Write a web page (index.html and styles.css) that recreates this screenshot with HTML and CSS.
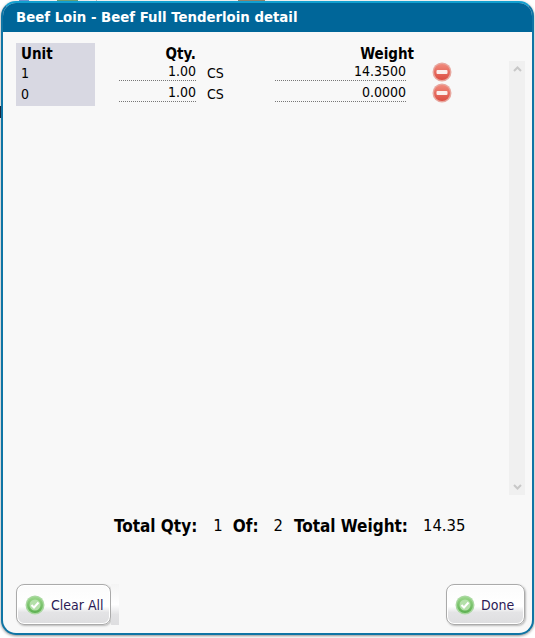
FILE: index.html
```html
<!DOCTYPE html>
<html lang="en">
<head>
<meta charset="utf-8">
<title>Beef Loin - Beef Full Tenderloin detail</title>
<link rel="stylesheet" href="styles.css">
</head>
<body>
<div class="window">
  <div class="title">Beef Loin - Beef Full Tenderloin detail</div>
  <div class="panel">
    <div class="content">
      <div class="detail">
        <div class="row head">
          <div class="unit">Unit</div>
          <div class="qty">Qty.</div>
          <div class="uom"></div>
          <div class="weight">Weight</div>
          <div></div>
        </div>
        <div class="row">
          <div class="unit">1</div>
          <div class="qty"><span class="field">1.00</span></div>
          <div class="uom">CS</div>
          <div class="weight"><span class="field">14.3500</span></div>
          <div class="act"><svg class="minus" viewBox="0 0 20 20"><use href="#minus-icon"/></svg></div>
        </div>
        <div class="row">
          <div class="unit">0</div>
          <div class="qty"><span class="field">1.00</span></div>
          <div class="uom">CS</div>
          <div class="weight"><span class="field">0.0000</span></div>
          <div class="act"><svg class="minus" viewBox="0 0 20 20"><use href="#minus-icon"/></svg></div>
        </div>
      </div>
      <div class="scrollbar">
        <svg class="arrow" viewBox="0 0 9 6"><path d="M1 5l3.5-3.5L8 5" fill="none" stroke="#c8c8c8" stroke-width="2"/></svg>
        <svg class="arrow" viewBox="0 0 9 6"><path d="M1 1l3.500 3.500L8 1" fill="none" stroke="#c8c8c8" stroke-width="2"/></svg>
      </div>
    </div>
    <div class="totals">
      <b class="t1">Total Qty:</b><span class="v1">1</span><b class="t2">Of:</b><span class="v2">2</span><b class="t3">Total Weight:</b><span class="v3">14.35</span>
    </div>
    <div class="actions">
      <div class="left">
        <button class="btn clear" type="button"><svg class="ok" viewBox="0 0 20 20"><use href="#ok-icon"/></svg>Clear All</button>
        <div class="stub"></div>
      </div>
      <button class="btn done" type="button"><svg class="ok" viewBox="0 0 20 20"><use href="#ok-icon"/></svg>Done</button>
    </div>
  </div>
</div>
<svg class="defs" width="0" height="0">
  <defs>
    <linearGradient id="rg" x1="0" y1="0" x2="0" y2="1"><stop offset="0" stop-color="#f08a7c"/><stop offset="1" stop-color="#dc4d42"/></linearGradient>
    <linearGradient id="gg" x1="0" y1="0" x2="0" y2="1"><stop offset="0" stop-color="#9ad68a"/><stop offset="1" stop-color="#5cb050"/></linearGradient>
    <symbol id="minus-icon" viewBox="0 0 20 20">
      <circle cx="10" cy="10" r="9.500" fill="#e8a79f"/>
      <circle cx="10" cy="10" r="8" fill="url(#rg)"/>
      <rect x="4.500" y="8" width="11" height="4" rx="1" fill="#fbeeec"/>
    </symbol>
    <symbol id="ok-icon" viewBox="0 0 20 20">
      <circle cx="10" cy="10" r="9.500" fill="#a9d8a0"/>
      <circle cx="10" cy="10" r="8" fill="url(#gg)"/>
      <circle cx="10" cy="10" r="5.500" fill="#b4e0aa"/>
      <path d="M6.500 10l2.500 2.500 4.500-5" fill="none" stroke="#fff" stroke-width="2"/>
    </symbol>
  </defs>
</svg>
</body>
</html>
```
FILE: styles.css
```css
* { box-sizing: border-box; }
html, body { margin: 0; padding: 0; }
body {
  width: 535px;
  height: 638px;
  overflow: hidden;
  padding: 1px 1px 0 1px;
  font-family: "DejaVu Sans Condensed", "DejaVu Sans", sans-serif;
  font-size: 14px;
  color: #000;
  background-color: #fff;
  background-repeat: no-repeat;
  background-image:
    linear-gradient(#6f9bdc, #6f9bdc),
    linear-gradient(#6fa97c, #6fa97c),
    linear-gradient(#c8c8c8, #c8c8c8),
    linear-gradient(#9a8a70, #9a8a70),
    linear-gradient(#20304a, #20304a);
  background-size: 10px 1px, 21px 1px, 1px 1px, 27px 1px, 1px 12px;
  background-position: 19px 0, 57px 0, 96px 0, 238px 0, 0 106px;
}
.defs { position: absolute; }
.window {
  width: 533px;
  height: 634px;
  border: 2px solid #0f75a5;
  border-top-color: #12a0d0;
  border-radius: 15px;
  background: #f8f8f8;
  display: flex;
  flex-direction: column;
  overflow: hidden;
  box-shadow: 0 1px 3px rgba(0,0,0,.45);
}
.title {
  height: 29px;
  flex: none;
  background: #006699;
  color: #fff;
  font-weight: 700;
  font-size: 14.8px;
  line-height: 28px;
  padding-left: 13px;
}
.panel {
  flex: 1;
  display: flex;
  flex-direction: column;
  padding: 11px 7px 8px 13px;
}
.content { display: flex; justify-content: space-between; height: 452px; flex: none; }
.detail { width: 440px; align-self: flex-start; }
.row {
  display: grid;
  grid-template-columns: 79px 101px 79px 131px 1fr;
  height: 21px;
}
.row.head { height: 19px; font-weight: 700; font-size: 15px; }
.unit { background: #d8d8e2; padding-left: 5px; line-height: 23px; }
.qty { padding-left: 24px; text-align: right; }
.head .qty { line-height: 23px; }
.head .weight { line-height: 23px; width: 139px; }
.uom { padding-left: 11px; line-height: 22px; }
.field {
  display: block;
  height: 19px;
  line-height: 19px;
  border-bottom: 1px dotted #777;
  text-align: right;
  font-size: 14px;
}
.weight { text-align: right; }
.act { padding-left: 26px; }
.minus { display: block; width: 20px; height: 20px; }
.scrollbar {
  width: 16px;
  margin-top: 18px;
  height: 434px;
  background: #f0f0f0;
  display: flex;
  flex-direction: column;
  justify-content: space-between;
  align-items: center;
  padding: 5px 0;
}
.arrow { width: 9px; height: 6px; display: block; }
.totals {
  margin-top: 19px;
  height: 22px;
  display: flex;
  line-height: 24px;
  font-size: 16.5px;
}
.totals b { font-size: 17px; display: block; }
.totals span { display: block; }
.t1 { margin-left: 98px; }
.v1 { margin-left: 16px; }
.t2 { margin-left: 10px; }
.v2 { margin-left: 15px; }
.t3 { margin-left: 11px; }
.v3 { margin-left: 15px; }
.actions { margin-top: auto; display: flex; justify-content: space-between; }
.left { display: flex; }
.btn {
  height: 41px;
  border: 1px solid #aaa;
  border-radius: 8px;
  background: linear-gradient(#fbfbfb 0%, #ffffff 55%, #e4e4e6 70%, #dedee0 100%);
  box-shadow: inset 0 0 0 1px #fff, 1px 1px 2px rgba(0,0,0,.25);
  display: flex;
  align-items: center;
  gap: 6px;
  padding: 0 0 0 8px;
  font-family: inherit;
  font-size: 14px;
  color: #2b1a55;
}
.clear { width: 95px; }
.done { width: 79px; }
.ok { width: 20px; height: 20px; display: block; flex: none; }
.stub { width: 8px; height: 41px; background: linear-gradient(#f4f4f4 0%, #fff 50%, #e2e2e4 75%, #dedee0 100%); }
```
